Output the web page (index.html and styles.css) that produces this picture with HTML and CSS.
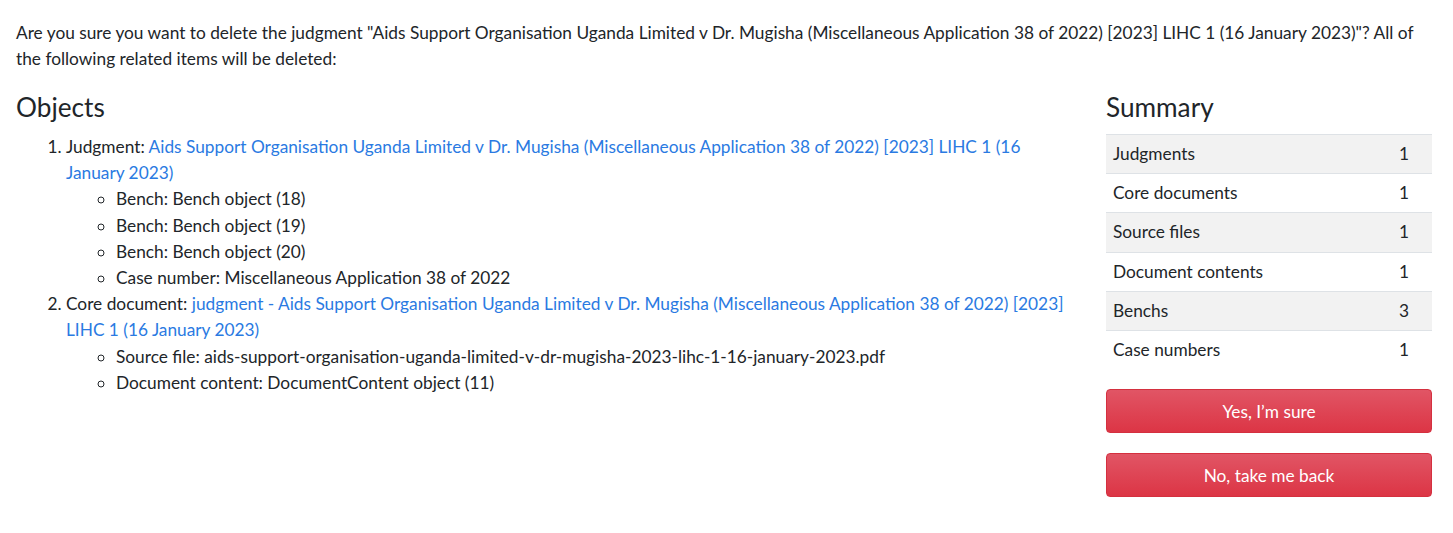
FILE: index.html
```html
<!DOCTYPE html>
<html lang="en">
<head>
    <meta charset="UTF-8">
    <meta name="viewport" content="width=device-width, initial-scale=1.0">
    <title>Delete judgment</title>
    <link rel="stylesheet" href="styles.css">
</head>
<body>
    <div class="page">
        <p class="intro">Are you sure you want to delete the judgment "Aids Support Organisation Uganda Limited v Dr. Mugisha (Miscellaneous Application 38 of 2022) [2023] LIHC 1 (16 January 2023)"? All of the following related items will be deleted:</p>
        <div class="columns">
            <div class="objects">
                <h3>Objects</h3>
                <ol class="object-list">
                    <li>Judgment: <a href="#">Aids Support Organisation Uganda Limited v Dr. Mugisha (Miscellaneous Application 38 of 2022) [2023] LIHC 1 (16 January 2023)</a>
                        <ul>
                            <li>Bench: Bench object (18)</li>
                            <li>Bench: Bench object (19)</li>
                            <li>Bench: Bench object (20)</li>
                            <li>Case number: Miscellaneous Application 38 of 2022</li>
                        </ul>
                    </li>
                    <li>Core document: <a href="#">judgment - Aids Support Organisation Uganda Limited v Dr. Mugisha (Miscellaneous Application 38 of 2022) [2023] LIHC 1 (16 January 2023)</a>
                        <ul>
                            <li>Source file: aids-support-organisation-uganda-limited-v-dr-mugisha-2023-lihc-1-16-january-2023.pdf</li>
                            <li>Document content: DocumentContent object (11)</li>
                        </ul>
                    </li>
                </ol>
            </div>
            <div class="summary">
                <h3>Summary</h3>
                <table class="summary-table">
                    <tr><td>Judgments</td><td class="num">1</td></tr>
                    <tr><td>Core documents</td><td class="num">1</td></tr>
                    <tr><td>Source files</td><td class="num">1</td></tr>
                    <tr><td>Document contents</td><td class="num">1</td></tr>
                    <tr><td>Benchs</td><td class="num">3</td></tr>
                    <tr><td>Case numbers</td><td class="num">1</td></tr>
                </table>
                <button class="btn-danger">Yes, I’m sure</button>
                <button class="btn-danger">No, take me back</button>
            </div>
        </div>
    </div>
</body>
</html>
```

FILE: styles.css
```css
body {
    margin: 0;
    font-family: Lato, "Open Sans", sans-serif;
    font-size: 17.3px;
    line-height: 26.2px;
    color: #212529;
    background: #ffffff;
}
.page {
    padding: 20px 21px 20px 16px;
}
.intro {
    margin: 0 0 17.5px 0;
}
.columns {
    display: grid;
    grid-template-columns: 1fr 326px;
    gap: 30px;
}
h3 {
    font-size: 26.2px;
    font-weight: 400;
    line-height: 34px;
    margin: 0 0 10px 0;
}
a {
    color: #2a7ae2;
    text-decoration: none;
}
.object-list {
    margin: 0;
    padding-left: 50px;
}
.object-list ul {
    margin: 0;
    padding-left: 50px;
    list-style: circle;
}
.summary-table {
    width: 100%;
    border-collapse: collapse;
    margin-bottom: 20px;
}
.summary-table td {
    border-top: 1px solid #dee2e6;
    padding: 6px 7px;
    height: 26px;
}
.summary-table tr:nth-child(odd) {
    background: #f2f2f2;
}
.summary-table .num {
    text-align: right;
    padding-right: 23px;
}
.btn-danger {
    display: block;
    width: 100%;
    height: 44px;
    margin-bottom: 20px;
    font-family: inherit;
    font-size: 17.3px;
    color: #ffffff;
    background: linear-gradient(to bottom, #e15565, #dc3545);
    border: 1px solid #d4303f;
    border-radius: 4px;
    cursor: pointer;
}
```
